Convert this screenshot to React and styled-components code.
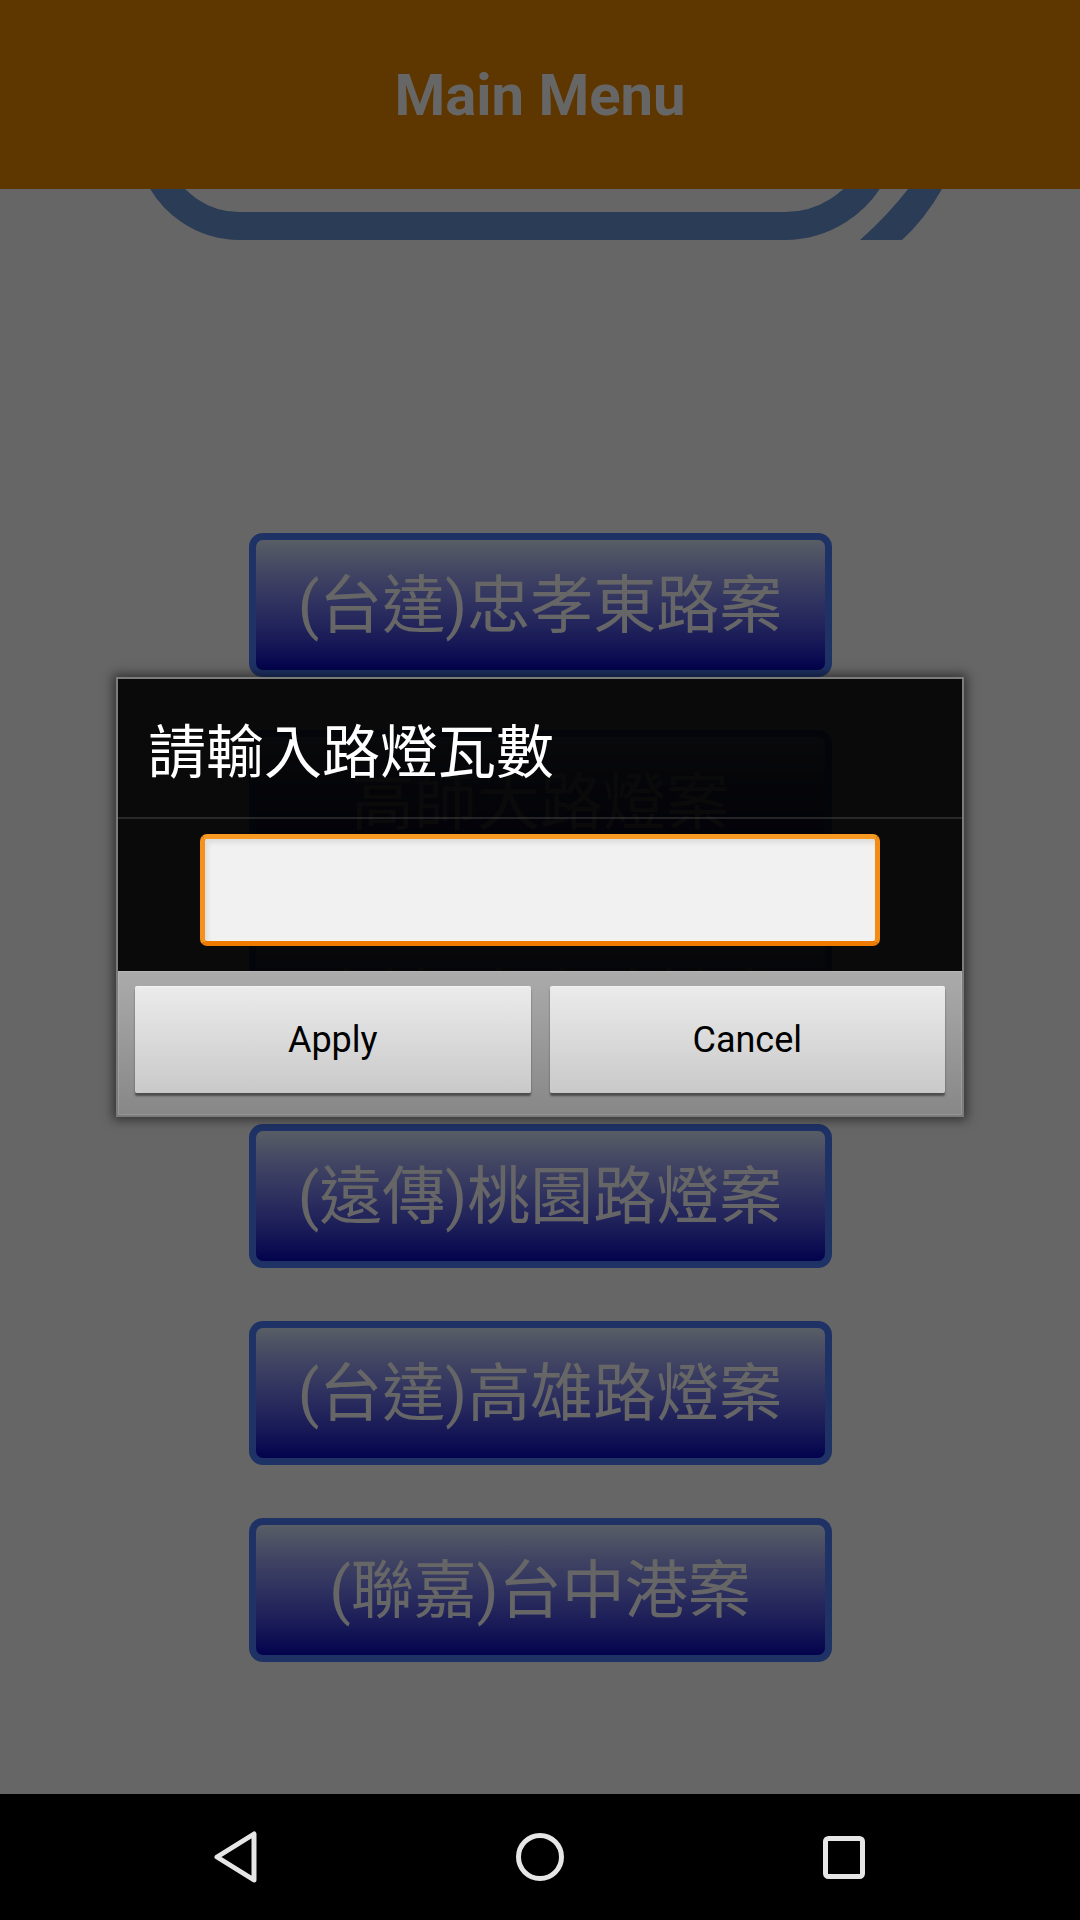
import React from 'react';
import styled, { createGlobalStyle } from 'styled-components';

const GlobalStyle = createGlobalStyle`
    html, body {
        margin: 0;
        padding: 0;
        background: #000;
    }
    body {
        font-family: Roboto, "Noto Sans CJK TC", sans-serif;
    }
`

const Phone = styled.div`
    width: 1080px;
    height: 1920px;
    display: flex;
    flex-direction: column;
    overflow: hidden;
`

const Screen = styled.div`
    position: relative;
    flex: 1;
    display: flex;
    flex-direction: column;
    background: #fff;
    overflow: hidden;
`

const Header = styled.header`
    height: 189px;
    flex-shrink: 0;
    display: flex;
    align-items: center;
    justify-content: center;
    background: #eb8a00;
    color: #fff;
    font: 700 58px Roboto, sans-serif;
`

const Content = styled.main`
    flex: 1;
    display: flex;
    flex-direction: column;
    align-items: center;
`

const LogoArea = styled.div`
    width: 100%;
    height: 344px;
    flex-shrink: 0;
    > svg {
        display: block;
    }
`

const MenuList = styled.div`
    display: flex;
    flex-direction: column;
    gap: 53px;
`

const MenuButton = styled.button`
    width: 583px;
    height: 144px;
    box-sizing: border-box;
    padding: 0;
    border: 7px solid #4b7dff;
    border-radius: 14px;
    background: linear-gradient(180deg, #dceaff 0%, #a4acf6 25%, #747bee 50%, #4347dc 75%, #0808c2 100%);
    color: #fff;
    font-family: Roboto, "Noto Sans CJK TC", sans-serif;
    font-size: 63px;
    line-height: 1;
    white-space: nowrap;
`

const Overlay = styled.div`
    position: absolute;
    inset: 0;
    display: flex;
    align-items: center;
    justify-content: center;
    background: rgba(0, 0, 0, 0.6);
`

const Dialog = styled.div`
    width: 848px;
    box-sizing: border-box;
    display: flex;
    flex-direction: column;
    border: 2px solid #7c7c7c;
    box-shadow: 0 0 10px 3px rgba(0, 0, 0, 0.5);
`

const DialogTitle = styled.div`
    height: 138px;
    display: flex;
    align-items: center;
    padding-left: 30px;
    background: rgba(0, 0, 0, 0.9);
    border-bottom: 2px solid rgba(60, 60, 60, 0.6);
    color: #fff;
    font-family: "Noto Sans CJK TC", sans-serif;
    font-size: 58px;
`

const InputRow = styled.div`
    padding: 15px 82px 25px;
    background: rgba(0, 0, 0, 0.9);
`

const TextInput = styled.input`
    display: block;
    width: 100%;
    height: 112px;
    box-sizing: border-box;
    border: 5px solid;
    border-color: #f89a22 #f38c12 #ee7a00 #f6921c;
    border-radius: 7px;
    background: #f1f1f1;
    box-shadow: inset 3px 4px 5px rgba(0, 0, 0, 0.08);
    outline: none;
    font-size: 40px;
`

const ButtonBar = styled.div`
    height: 144px;
    box-sizing: border-box;
    display: flex;
    gap: 19px;
    padding: 15px 17px 22px;
    background: linear-gradient(180deg, #ababab, #878787);
    box-shadow: inset 0 0 0 1px rgba(255, 255, 255, 0.12);
`

const DialogButton = styled.button`
    flex: 1;
    height: 107px;
    padding: 0;
    border: none;
    border-top: 1px solid #f3f3f3;
    border-radius: 2px;
    background: linear-gradient(180deg, #ebebeb, #c9c9c9);
    box-shadow: 0 3px 2px rgba(0, 0, 0, 0.45);
    color: #000;
    font-family: Roboto, sans-serif;
    font-size: 36px;
`

const NavBar = styled.nav`
    height: 126px;
    flex-shrink: 0;
    display: flex;
    justify-content: center;
    background: #000;
`

const NavSlot = styled.div`
    width: 304px;
    display: flex;
    align-items: center;
    justify-content: center;
`

const logoBlue = '#6b98d7';

function Logo() {
    return (
        <svg width="1080" height="60" viewBox="0 0 1080 60">
            <path
                d="M 156 -20 A 90 90 0 0 0 240 37 L 785 37 A 100 100 0 0 0 875 -20"
                fill="none"
                stroke={logoBlue}
                strokeWidth="28"
            />
            <path d="M 908 0 L 942 0 Q 925 30 902 51 L 860 51 Q 888 26 908 0 Z" fill={logoBlue} />
        </svg>
    );
}

const navStroke = '#e6e6e6';

function BackIcon() {
    return (
        <svg width="48" height="52" viewBox="0 0 48 52">
            <path d="M 42 3 L 42 49 L 5 26 Z" fill="none" stroke={navStroke} strokeWidth="5" strokeLinejoin="round" />
        </svg>
    );
}

function HomeIcon() {
    return (
        <svg width="50" height="50" viewBox="0 0 50 50">
            <circle cx="25" cy="25" r="21.5" fill="none" stroke={navStroke} strokeWidth="5" />
        </svg>
    );
}

function RecentsIcon() {
    return (
        <svg width="46" height="46" viewBox="0 0 46 46">
            <rect x="4.5" y="4.5" width="37" height="38" rx="3" fill="none" stroke={navStroke} strokeWidth="5" />
        </svg>
    );
}

const projects = [
    '(台達)忠孝東路案',
    '高師大路燈案',
    '(台達)中山路燈案',
    '(遠傳)桃園路燈案',
    '(台達)高雄路燈案',
    '(聯嘉)台中港案',
];

function App() {
    return (
        <Phone>
            <GlobalStyle />
            <Screen>
                <Header>Main Menu</Header>
                <Content>
                    <LogoArea>
                        <Logo />
                    </LogoArea>
                    <MenuList>
                        {projects.map((name) => (
                            <MenuButton key={name}>{name}</MenuButton>
                        ))}
                    </MenuList>
                </Content>
                <Overlay>
                    <Dialog>
                        <DialogTitle>請輸入路燈瓦數</DialogTitle>
                        <InputRow>
                            <TextInput type="text" />
                        </InputRow>
                        <ButtonBar>
                            <DialogButton>Apply</DialogButton>
                            <DialogButton>Cancel</DialogButton>
                        </ButtonBar>
                    </Dialog>
                </Overlay>
            </Screen>
            <NavBar>
                <NavSlot><BackIcon /></NavSlot>
                <NavSlot><HomeIcon /></NavSlot>
                <NavSlot><RecentsIcon /></NavSlot>
            </NavBar>
        </Phone>
    );
}

export default App;
